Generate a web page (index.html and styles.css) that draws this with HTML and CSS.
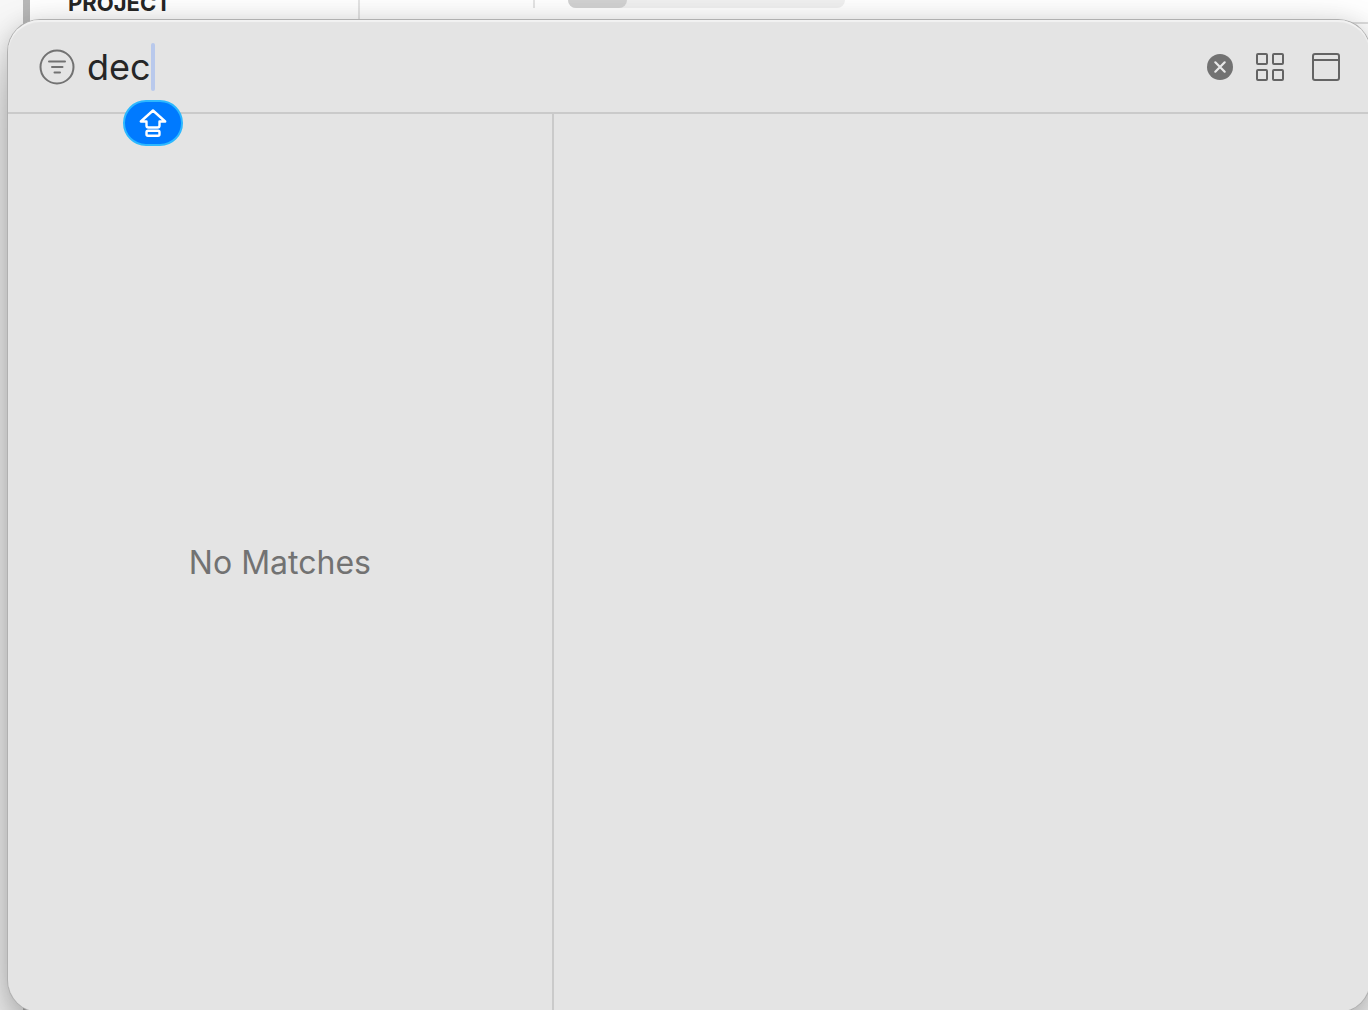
FILE: index.html
```html
<!DOCTYPE html>
<html lang="en">
<head>
<meta charset="utf-8">
<meta name="viewport" content="width=device-width, initial-scale=1">
<title>Library</title>
<link rel="stylesheet" href="styles.css">
</head>
<body>
<div class="editor">
  <div class="navigator-edge"></div>
  <aside class="project-list"><h2 class="project-heading">PROJECT</h2></aside>
  <div class="editor-toolbar">
    <div class="filter-bar">
      <div class="segments"><span class="segment-selected"></span></div>
    </div>
  </div>
</div>

<main class="library">
  <header class="search-bar">
    <button class="icon-button" type="button" aria-label="Filter">
      <svg width="36" height="36" viewBox="0 0 36 36" fill="none" stroke="#727272" stroke-width="2" stroke-linecap="round">
        <circle cx="18" cy="18" r="16.5"/>
        <path d="M10 12.500h16M13 18h10.500M15.500 23.500h5.500"/>
      </svg>
    </button>
    <div class="search-field">
      <input class="search-input" type="text" value="dec" aria-label="Search library" spellcheck="false">
      <span class="caret">
        <span class="caps-lock" role="img" aria-label="Caps Lock is on">
          <svg width="28" height="30" viewBox="0 0 28 30" fill="none" stroke="#fff" stroke-width="2.400" stroke-linejoin="round">
            <path d="M14 2.500L1.800 13.500H7.500V17.500Q7.500 19.500 9.500 19.500H18.500Q20.500 19.500 20.500 17.500V13.500H26.200Z"/>
            <rect x="7.500" y="22.800" width="13" height="5" rx="1.500"/>
          </svg>
        </span>
      </span>
    </div>
    <div class="actions">
      <button class="icon-button" type="button" aria-label="Clear search">
        <svg width="26" height="26" viewBox="0 0 26 26">
          <circle cx="13" cy="13" r="13" fill="#727272"/>
          <path d="M8.300 8.300l9.400 9.400M17.700 8.300l-9.400 9.400" stroke="#e8e8e8" stroke-width="2.200" stroke-linecap="round"/>
        </svg>
      </button>
      <button class="icon-button grid-button" type="button" aria-label="Grid view">
        <svg width="28" height="28" viewBox="0 0 28 28" fill="none" stroke="#646464" stroke-width="2">
          <rect x="1" y="1" width="10" height="10" rx="1"/><rect x="17" y="1" width="10" height="10" rx="1"/>
          <rect x="1" y="17" width="10" height="10" rx="1"/><rect x="17" y="17" width="10" height="10" rx="1"/>
        </svg>
      </button>
      <button class="icon-button detail-button" type="button" aria-label="Show details">
        <svg width="28" height="28" viewBox="0 0 28 28" fill="none" stroke="#646464" stroke-width="2">
          <rect x="1" y="1" width="26" height="26" rx="2"/><path d="M1 7h26"/>
        </svg>
      </button>
    </div>
  </header>
  <div class="library-body">
    <section class="results"><p class="empty-message">No Matches</p></section>
    <section class="details" aria-label="Details"></section>
  </div>
</main>
</body>
</html>
```
FILE: styles.css
```css
* { box-sizing: border-box; }

body {
  margin: 0;
  height: 100vh;
  overflow: hidden;
  font-family: Inter, "Liberation Sans", sans-serif;
  color: #262626;
  background: #fff;
}

.editor {
  display: flex;
  height: 100%;
}

.navigator-edge {
  flex: none;
  width: 30px;
  background: #f8f8f8;
  border-right: 7px solid #b8b8b8;
}

.project-list {
  flex: none;
  width: 330px;
  padding-left: 38px;
  border-right: 2px solid #e4e4e4;
}

.project-heading {
  margin: -10px 0 0;
  font-size: 22px;
  line-height: 26px;
  font-weight: 700;
}

.editor-toolbar {
  flex: 1;
  height: 24px;
  border-bottom: 2px solid #dedede;
}

.filter-bar {
  width: 486px;
  height: 8px;
  margin-left: 173px;
  padding-left: 33px;
  border-left: 2px solid #e4e4e4;
}

.segments {
  display: flex;
  width: 277px;
  height: 8px;
  border-radius: 0 0 10px 10px;
  background: #f0f0f0;
}

.segment-selected {
  width: 59px;
  border-radius: 0 0 10px 10px;
  background: #d2d2d2;
}

/* Floating library window */
.library {
  position: absolute;
  inset: 20px -2px -2px 8px;
  display: flex;
  flex-direction: column;
  border-radius: 32px;
  background: #e4e4e4;
  box-shadow: 0 0 0 1px #b0b0b0, inset 0 2px 1px #f2f2f2, 0 0 20px rgba(0, 0, 0, 0.1), 0 30px 60px rgba(0, 0, 0, 0.36);
}

.search-bar {
  display: flex;
  flex: none;
  align-items: center;
  gap: 12px;
  height: 94px;
  padding: 2px 30px 0 31px;
  border-bottom: 2px solid #cacaca;
}

.icon-button {
  display: flex;
  flex: none;
  padding: 0;
  border: 0;
  background: none;
}

.icon-button svg { display: block; }

.search-field {
  display: flex;
  flex: 1;
  align-items: center;
}

.search-input {
  field-sizing: content;
  padding: 0;
  border: 0;
  outline: 0;
  background: none;
  color: #262626;
  font: 400 36px/48px Inter, "Liberation Sans", sans-serif;
}

.caret {
  position: relative;
  width: 4px;
  height: 48px;
  border-radius: 2px;
  background: #b9c9ec;
}

.caps-lock {
  position: absolute;
  top: 57px;
  left: 50%;
  display: flex;
  align-items: center;
  justify-content: center;
  width: 60px;
  height: 46px;
  margin-left: -30px;
  border: 2px solid #2cb8ff;
  border-radius: 23px;
  background: #007aff;
}

.actions {
  display: flex;
  align-items: center;
}

.grid-button { margin-left: 23px; }
.detail-button { margin-left: 28px; }

.library-body {
  display: flex;
  flex: 1;
}

.results {
  display: flex;
  align-items: center;
  justify-content: center;
  width: calc(40% + 1px);
  border-right: 2px solid #cacaca;
}

.empty-message {
  margin: 0;
  color: #727272;
  font-size: 32px;
  line-height: 40px;
}

.details { flex: 1; }
```
